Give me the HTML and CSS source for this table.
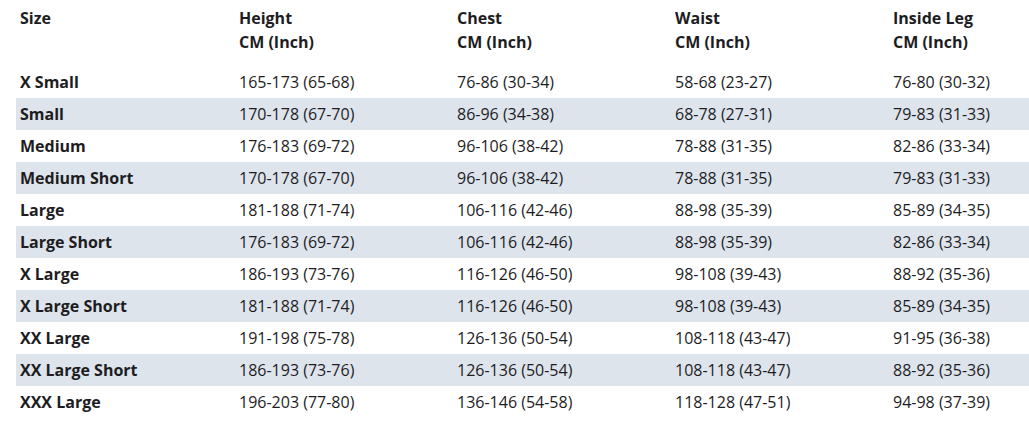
FILE: index.html
```html
<!DOCTYPE html>
<html>
<head>
<meta charset="utf-8">
<link rel="stylesheet" href="styles.css">
</head>
<body>
<table class="size-table">
  <colgroup>
    <col class="col-size">
    <col class="col-measure">
    <col class="col-measure">
    <col class="col-measure">
    <col class="col-last">
  </colgroup>
  <thead>
    <tr>
      <th>Size</th>
      <th>Height<br>CM (Inch)</th>
      <th>Chest<br>CM (Inch)</th>
      <th>Waist<br>CM (Inch)</th>
      <th>Inside Leg<br>CM (Inch)</th>
    </tr>
  </thead>
  <tbody>
    <tr><th>X Small</th><td>165-173 (65-68)</td><td>76-86 (30-34)</td><td>58-68 (23-27)</td><td>76-80 (30-32)</td></tr>
    <tr><th>Small</th><td>170-178 (67-70)</td><td>86-96 (34-38)</td><td>68-78 (27-31)</td><td>79-83 (31-33)</td></tr>
    <tr><th>Medium</th><td>176-183 (69-72)</td><td>96-106 (38-42)</td><td>78-88 (31-35)</td><td>82-86 (33-34)</td></tr>
    <tr><th>Medium Short</th><td>170-178 (67-70)</td><td>96-106 (38-42)</td><td>78-88 (31-35)</td><td>79-83 (31-33)</td></tr>
    <tr><th>Large</th><td>181-188 (71-74)</td><td>106-116 (42-46)</td><td>88-98 (35-39)</td><td>85-89 (34-35)</td></tr>
    <tr><th>Large Short</th><td>176-183 (69-72)</td><td>106-116 (42-46)</td><td>88-98 (35-39)</td><td>82-86 (33-34)</td></tr>
    <tr><th>X Large</th><td>186-193 (73-76)</td><td>116-126 (46-50)</td><td>98-108 (39-43)</td><td>88-92 (35-36)</td></tr>
    <tr><th>X Large Short</th><td>181-188 (71-74)</td><td>116-126 (46-50)</td><td>98-108 (39-43)</td><td>85-89 (34-35)</td></tr>
    <tr><th>XX Large</th><td>191-198 (75-78)</td><td>126-136 (50-54)</td><td>108-118 (43-47)</td><td>91-95 (36-38)</td></tr>
    <tr><th>XX Large Short</th><td>186-193 (73-76)</td><td>126-136 (50-54)</td><td>108-118 (43-47)</td><td>88-92 (35-36)</td></tr>
    <tr><th>XXX Large</th><td>196-203 (77-80)</td><td>136-146 (54-58)</td><td>118-128 (47-51)</td><td>94-98 (37-39)</td></tr>
  </tbody>
</table>
</body>
</html>
```
FILE: styles.css
```css
html, body {
  background: #ffffff;
}
body {
  margin: 2px 0 0 16px;
  font-family: "Open Sans", "Noto Sans", sans-serif;
  font-size: 16px;
  color: #1d1d1f;
}
.size-table {
  width: 1013px;
  table-layout: fixed;
  border-collapse: collapse;
  border-spacing: 0;
}
.col-size {
  width: 219px;
}
.col-measure {
  width: 218px;
}
.size-table th,
.size-table td {
  padding: 4px;
  line-height: 24px;
  text-align: left;
  vertical-align: top;
  white-space: nowrap;
}
.size-table th {
  font-weight: 700;
}
.size-table td {
  font-weight: 400;
}
.size-table thead th {
  padding-bottom: 12px;
}
.size-table tbody tr:nth-child(even) {
  background: #dde4ec;
}
```
